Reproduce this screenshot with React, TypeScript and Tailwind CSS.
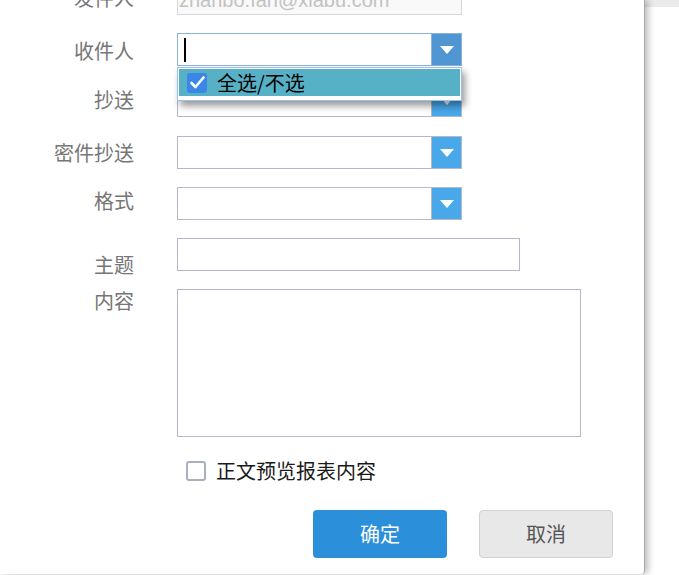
import React from "react";

const cjk = { fontFamily: '"Noto Sans CJK SC", "Noto Sans", sans-serif' };

function Arrow() {
  return (
    <svg width="14" height="8" viewBox="0 0 14 8">
      <path d="M0 0 L14 0 L7 8 Z" fill="#ffffff" />
    </svg>
  );
}

function Select({ focused, children }: { focused?: boolean; children?: React.ReactNode }) {
  return (
    <div
      className={
        focused
          ? "flex w-[285px] h-[33px] border border-[#8db0de] bg-white"
          : "flex w-[285px] h-[33px] border border-[#b5b8c8] bg-white"
      }
    >
      <div className="flex-1 relative">{children}</div>
      <div
        className={
          focused
            ? "w-[30px] h-full border-l border-[#8db0de] bg-[#4f96d3] flex items-center justify-center"
            : "w-[30px] h-full border-l border-[#b5b8c8] bg-[#48a8ea] flex items-center justify-center"
        }
      >
        <Arrow />
      </div>
    </div>
  );
}

function Label({ text, pt }: { text: string; pt: string }) {
  return (
    <div
      className={"w-[134px] shrink-0 text-right text-[20px] leading-[20px] text-[#767676] " + pt}
      style={cjk}
    >
      {text}
    </div>
  );
}

export default function App() {
  return (
    <div className="w-[679px] h-[575px] overflow-hidden flex bg-white">
      <div className="relative z-10 w-[645px] h-[574px] shrink-0 bg-white border-r border-[#a8a8a8] rounded-br-[4px] shadow-[3px_0_7px_rgba(0,0,0,0.28)] flex flex-col">
        {/* 发件人 */}
        <div className="flex h-[33px] -mt-[18px]">
          <Label text="发件人" pt="pt-[6px]" />
          <div className="ml-[43px] w-[285px] h-[33px] border border-[#d6d6dc] bg-[#f9f9f9] flex items-center pl-[1px]">
            <span
              className="text-[20px] leading-[20px] text-[#c2c2c2] mt-[2px]"
              style={{ fontFamily: '"Liberation Sans", Arial, sans-serif' }}
            >
              zhanbo.fan@xiabu.com
            </span>
          </div>
        </div>

        {/* 收件人 */}
        <div className="flex h-[33px] mt-[18px]">
          <Label text="收件人" pt="pt-[8px]" />
          <div className="ml-[43px] relative z-20">
            <Select focused>
              <span className="absolute left-[6px] top-[4px] w-[2px] h-[24px] bg-black" />
            </Select>
            <div className="absolute left-0 top-[34px] w-[285px] border border-[#9cc0ea] bg-white p-[1px] pb-[4px] shadow-[3px_5px_7px_rgba(0,0,0,0.4)]">
              <div className="h-[27px] bg-[#57b1c6] flex items-center pl-[8px]">
                <span className="w-[20px] h-[20px] rounded-[3px] bg-[#3a87e8] flex items-center justify-center">
                  <svg width="15" height="13" viewBox="0 0 15 13">
                    <path
                      d="M1.5 7 L5.5 11 L13.5 1.5"
                      fill="none"
                      stroke="#ffffff"
                      strokeWidth="2.6"
                      strokeLinecap="round"
                      strokeLinejoin="round"
                    />
                  </svg>
                </span>
                <span className="ml-[10px] text-[20px] leading-[20px] text-black" style={cjk}>
                  全选/不选
                </span>
              </div>
            </div>
          </div>
        </div>

        {/* 抄送 */}
        <div className="flex h-[33px] mt-[18px]">
          <Label text="抄送" pt="pt-[6px]" />
          <div className="ml-[43px]">
            <Select />
          </div>
        </div>

        {/* 密件抄送 */}
        <div className="flex h-[33px] mt-[19px]">
          <Label text="密件抄送" pt="pt-[7px]" />
          <div className="ml-[43px]">
            <Select />
          </div>
        </div>

        {/* 格式 */}
        <div className="flex h-[33px] mt-[18px]">
          <Label text="格式" pt="pt-[4px]" />
          <div className="ml-[43px]">
            <Select />
          </div>
        </div>

        {/* 主题 */}
        <div className="flex h-[33px] mt-[18px]">
          <Label text="主题" pt="pt-[17px]" />
          <div className="ml-[43px] w-[343px] h-[33px] border border-[#b5b8c8] bg-white" />
        </div>

        {/* 内容 */}
        <div className="flex mt-[18px]">
          <Label text="内容" pt="pt-[2px]" />
          <div className="ml-[43px] w-[404px] h-[148px] border border-[#b5b8c8] bg-white" />
        </div>

        {/* checkbox */}
        <div className="flex items-center mt-[24px] ml-[186px] h-[20px]">
          <span className="w-[20px] h-[20px] rounded-[3px] border-[2px] border-[#a9b0bd] bg-white" />
          <span className="ml-[10px] text-[20px] leading-[20px] text-[#1a1a1a]" style={cjk}>
            正文预览报表内容
          </span>
        </div>

        {/* buttons */}
        <div className="flex justify-end gap-[32px] mt-[29px] pr-[31px]">
          <button
            className="w-[134px] h-[48px] rounded-[4px] bg-[#2b90d9] text-white text-[20px]"
            style={cjk}
          >
            确定
          </button>
          <button
            className="w-[134px] h-[48px] rounded-[4px] bg-[#e8e8e8] border border-[#d2d2d2] text-[#555555] text-[20px]"
            style={cjk}
          >
            取消
          </button>
        </div>
      </div>
      <div className="flex-1">
        <div className="h-[7px] bg-[#ebebeb]" />
      </div>
    </div>
  );
}
